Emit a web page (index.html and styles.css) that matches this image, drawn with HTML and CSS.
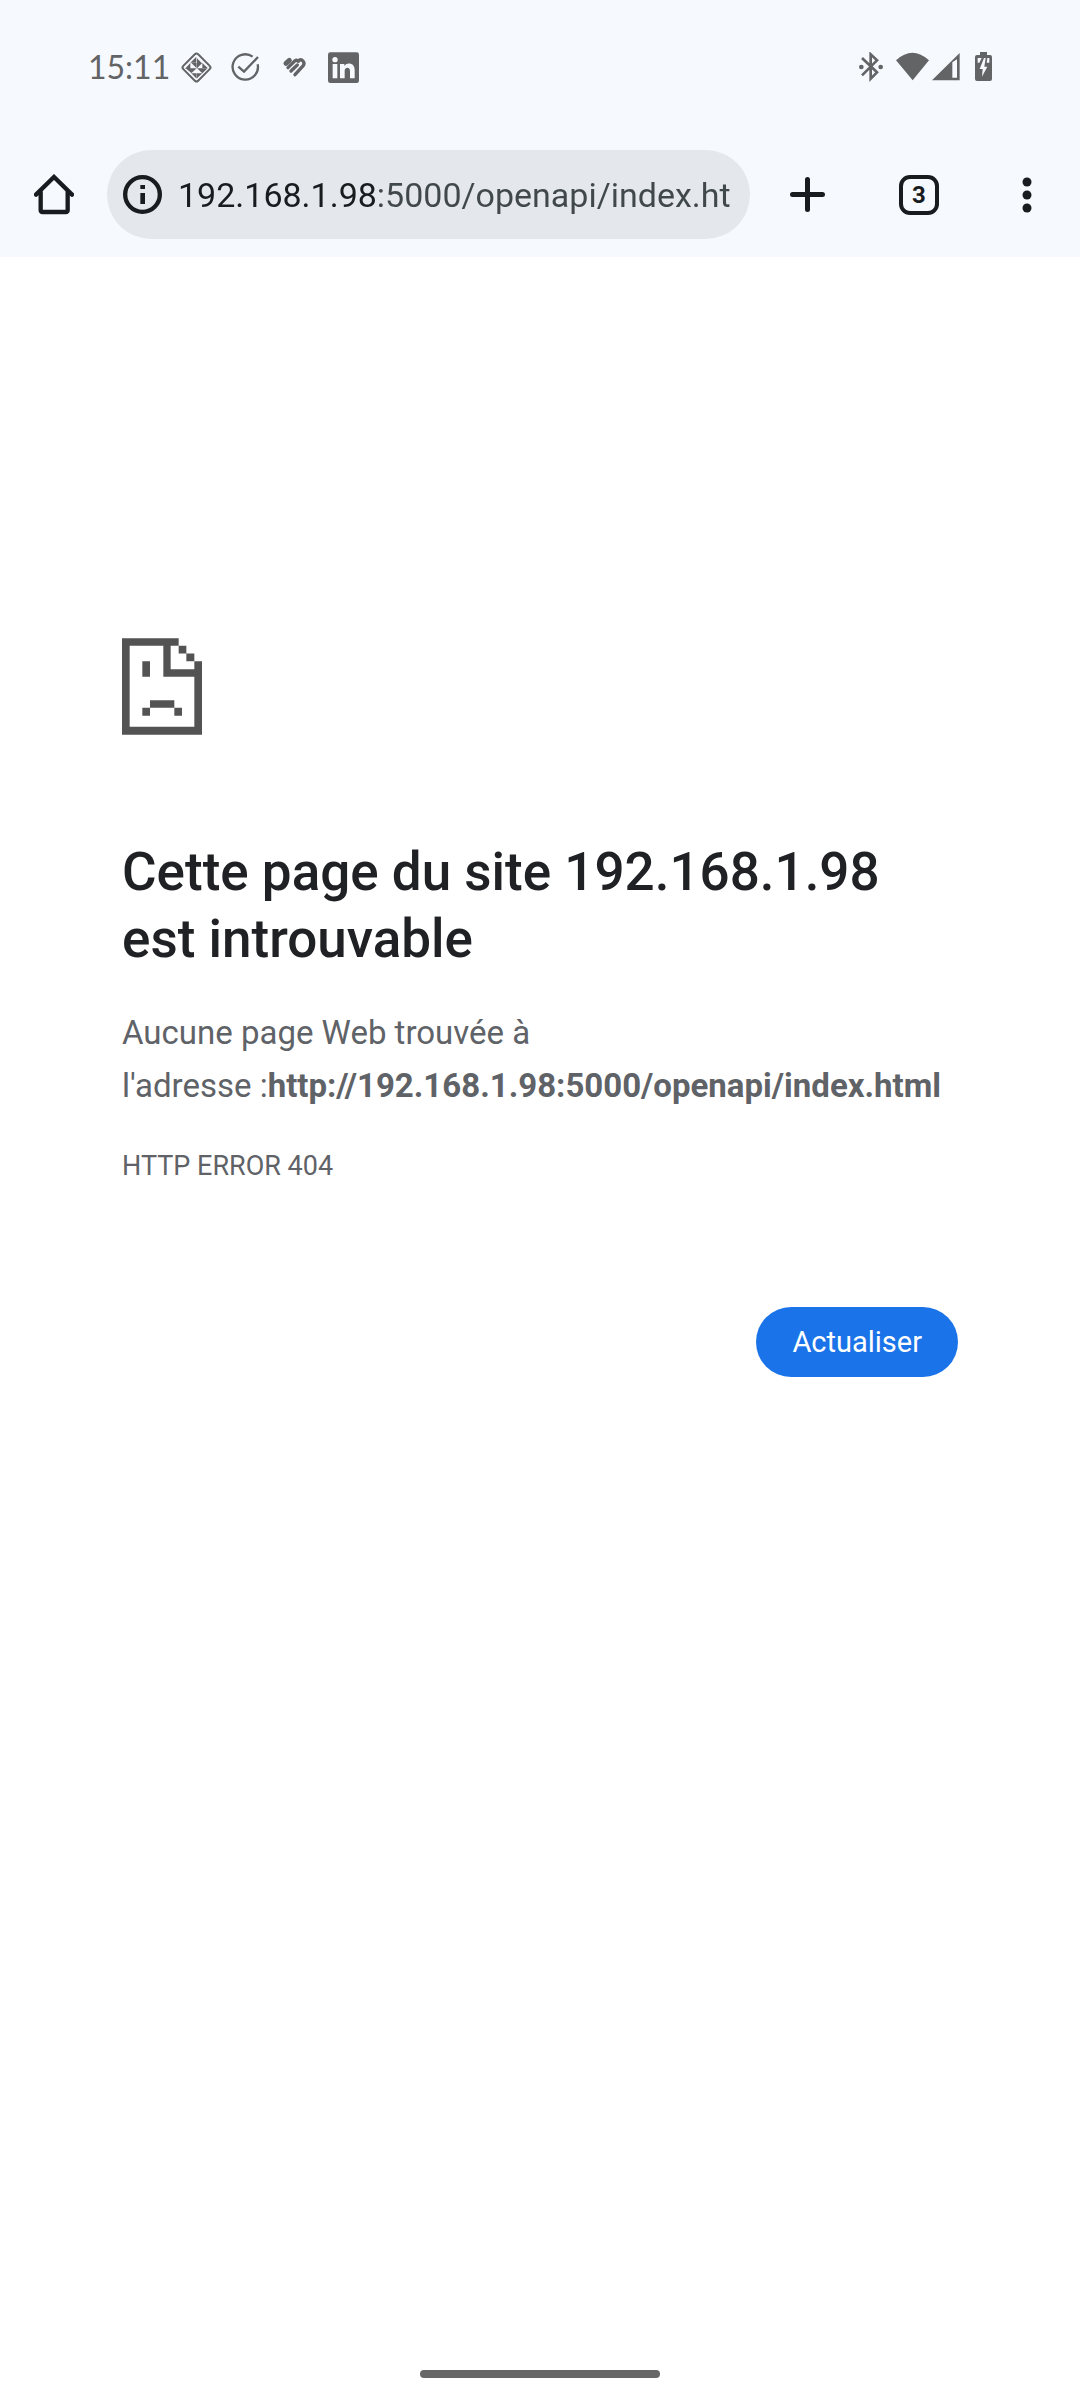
FILE: index.html
```html
<!DOCTYPE html>
<html lang="fr">
<head>
<meta charset="utf-8">
<meta name="viewport" content="width=device-width, initial-scale=1">
<title>192.168.1.98</title>
<link rel="stylesheet" href="styles.css">
</head>
<body>
<header class="chrome">
  <div class="status">
    <div class="status-left">
      <time class="clock">15:11</time>
      <svg width="33" height="33" viewBox="330 62 99 99" aria-hidden="true">
        <rect x="348" y="80" width="63" height="63" rx="7" transform="rotate(45 379.500 111.500)" fill="none" stroke="#636466" stroke-width="6"/>
        <g fill="#636466">
          <path d="M379 79v18h-18zM381 84l14 14h-14zM361 98v17h-16zM364 98h16v16zM381 98h16l-16 16zM397 98l16 15h-16zM347 114h17v14zM364 114h16l-16 15zM381 114l16 15v-15zM397 114h16l-16 15zM364 129h16v16zM381 129h16l-16 15z"/>
        </g>
      </svg>
      <svg width="33" height="33" viewBox="477 62 99 99" fill="none" stroke="#636466" stroke-width="7" aria-hidden="true">
        <path d="M548 79A38 38 0 1 0 563 102M505 109l17 15 42-44"/>
      </svg>
      <svg width="33" height="33" viewBox="624 62 99 99" fill="none" stroke="#636466" stroke-linecap="round" aria-hidden="true">
        <path d="M648 99l10-9" stroke-width="15"/>
        <path d="M654 112l20-20q6-5 11 1" stroke-width="10"/>
        <path d="M663 122l19-18M675 133l24-26q6-8 0-15t-13-1" stroke-width="10"/>
      </svg>
      <svg width="33" height="33" viewBox="771 62 99 99" aria-hidden="true">
        <rect x="774" y="66" width="93" height="92" rx="7" fill="#636466"/>
        <g fill="#f6f9fe"><circle cx="795" cy="88" r="8"/><path d="M788 101h14v43h-14zM810 101h13v6c8-12 31-10 31 12v25h-14v-22c0-13-16-12-16 0v22h-14z"/></g>
      </svg>
    </div>
    <div class="status-right">
      <svg width="34" height="30" viewBox="117 66 102 90" aria-hidden="true">
        <path d="M126 84l45 43-19 19V73l19 18-45 45" fill="none" stroke="#636466" stroke-width="8"/>
        <circle cx="124" cy="111" r="7" fill="#636466"/><circle cx="182" cy="111" r="7" fill="#636466"/>
      </svg>
      <svg width="33" height="30" viewBox="228 66 99 90" aria-hidden="true"><path d="M228 91q49-45 99 0l-49 60z" fill="#636466"/></svg>
      <svg width="28" height="30" viewBox="336 66 84 90" aria-hidden="true"><path fill-rule="evenodd" d="M336 151l83-82v82zM397 97v46h14V88z" fill="#636466"/></svg>
      <svg width="29" height="30" viewBox="429 66 87 90" aria-hidden="true">
        <path d="M480 66h21v9h9q6 0 6 6v66q0 6-6 6h-39q-6 0-6-6V81q0-6 6-6h9z" fill="#636466"/>
        <path d="M473 84h12l-7 14h-5zM502 84h6v14h-8zM492 84l-13 33h9l-2 23 16-30h-9l4-26z" fill="#f6f9fe"/>
      </svg>
    </div>
  </div>
  <div class="toolbar">
    <button class="tool tool-home" aria-label="Accueil">
      <svg width="40" height="41" viewBox="100 132 120 123" fill="none" stroke="#191c1e" stroke-width="13" aria-hidden="true">
        <path d="M106 194l54-53 54 53" stroke-linecap="round"/><path d="M120 184v56q0 6 6 6h69q6 0 6-6v-56"/>
      </svg>
    </button>
    <div class="omnibox">
      <button class="info" aria-label="Informations sur le site">
        <svg width="39" height="39" viewBox="369 135 117 117" aria-hidden="true">
          <circle cx="427.500" cy="193.500" r="52" fill="none" stroke="#191c1e" stroke-width="13"/>
          <path d="M421 165h14v12h-14zM421 189h14v33h-14z" fill="#191c1e"/>
        </svg>
      </button>
      <input class="url" type="text" aria-label="Adresse" value="192.168.1.98:5000/openapi/index.ht">
    </div>
    <button class="tool tool-new" aria-label="Nouvel onglet">
      <svg width="35" height="35" viewBox="0 0 35 35" stroke="#191c1e" stroke-width="5" stroke-linecap="round" aria-hidden="true"><path d="M17.500 2.500v30M2.500 17.500h30"/></svg>
    </button>
    <button class="tool tool-tabs" aria-label="3 onglets"><span class="tab-count">3</span></button>
    <button class="tool tool-menu" aria-label="Menu">
      <svg width="10" height="36" viewBox="0 0 10 36" fill="#191c1e" aria-hidden="true"><circle cx="5" cy="5" r="4.500"/><circle cx="5" cy="18" r="4.500"/><circle cx="5" cy="31" r="4.500"/></svg>
    </button>
  </div>
</header>
<main class="error">
  <svg class="sad-page" width="80" height="97" viewBox="66 55 240 290" fill="#535353" aria-hidden="true">
    <path d="M66 55h170v23h-24v70h71v-24h23v221H66zM89 78v243h194V171h-93V78z" fill-rule="evenodd"/>
    <path d="M236 78h23v23h-23zM259 101h24v23h-24zM127 124h23v47h-23zM150 241h73v23h-73zM127 264h23v24h-23zM223 264h23v24h-23z"/>
  </svg>
  <h1 class="title">Cette page du site 192.168.1.98 est introuvable</h1>
  <p class="message">Aucune page Web trouvée à l'adresse&nbsp;:<strong>http://192.168.1.98:5000/openapi/index.html</strong></p>
  <p class="code">HTTP ERROR 404</p>
  <button class="reload">Actualiser</button>
</main>
<footer class="gesture"><div class="handle"></div></footer>
</body>
</html>
```
FILE: styles.css
```css
* {
  box-sizing: border-box;
}

body {
  display: flex;
  flex-direction: column;
  min-height: 100vh;
  margin: 0;
  background: #fff;
  font-family: Roboto, sans-serif;
}

button,
input {
  border: 0;
  margin: 0;
  padding: 0;
  background: none;
  font: inherit;
}

svg {
  display: block;
  flex: none;
}

.chrome {
  padding: 48px 0 18px;
  background: #f6f9fe;
}

.status {
  display: flex;
  justify-content: space-between;
  align-items: center;
  height: 38px;
  padding: 0 88px;
}

.status-left {
  display: flex;
  align-items: center;
  gap: 16px;
}

.clock {
  width: 76px;
  color: #636466;
  font-family: Lato, sans-serif;
  font-size: 32px;
  line-height: 36px;
  white-space: nowrap;
}

.status-right {
  display: flex;
  align-items: center;
  gap: 3px;
}

.toolbar {
  display: flex;
  align-items: center;
  margin-top: 64px;
}

.tool {
  display: flex;
  flex: none;
  justify-content: center;
  align-items: center;
  height: 89px;
}

.tool-home {
  width: 107px;
}

.tool-new {
  width: 114px;
}

.tool-tabs {
  width: 110px;
}

.tool-menu {
  width: 106px;
}

.tab-count {
  width: 40px;
  height: 40px;
  border: 4px solid #191c1e;
  border-radius: 11px;
  color: #191c1e;
  font-size: 24px;
  font-weight: 700;
  line-height: 32px;
  text-align: center;
}

.omnibox {
  display: flex;
  flex: 1;
  align-items: center;
  gap: 16px;
  min-width: 0;
  height: 89px;
  padding: 0 16px;
  border-radius: 45px;
  background: #e4e7eb;
}

.url {
  flex: 1;
  min-width: 0;
  height: 60px;
  background: linear-gradient(to right, #191c1e 199px, #40484b 199px);
  background-clip: text;
  color: transparent;
  font-size: 34px;
}

.error {
  display: flex;
  flex: 1;
  flex-direction: column;
  align-items: flex-start;
  padding: 381px 122px 0;
  color: #5f6368;
}

.title {
  margin: 104px 0 0;
  color: #202124;
  font-size: 53px;
  font-weight: 500;
  line-height: 67px;
}

.message {
  margin: 33px 0 0;
  font-size: 33px;
  line-height: 53px;
}

.code {
  margin: 33px 0 0;
  font-size: 27px;
  line-height: 42px;
}

.reload {
  align-self: flex-end;
  margin-top: 120px;
  padding: 0 36px;
  border-radius: 35px;
  background: #1a73e8;
  color: #fff;
  font-size: 29px;
  line-height: 70px;
}

.gesture {
  display: flex;
  justify-content: center;
  padding: 22px 0;
}

.handle {
  width: 240px;
  height: 8px;
  border-radius: 4px;
  background: #666;
}
```
